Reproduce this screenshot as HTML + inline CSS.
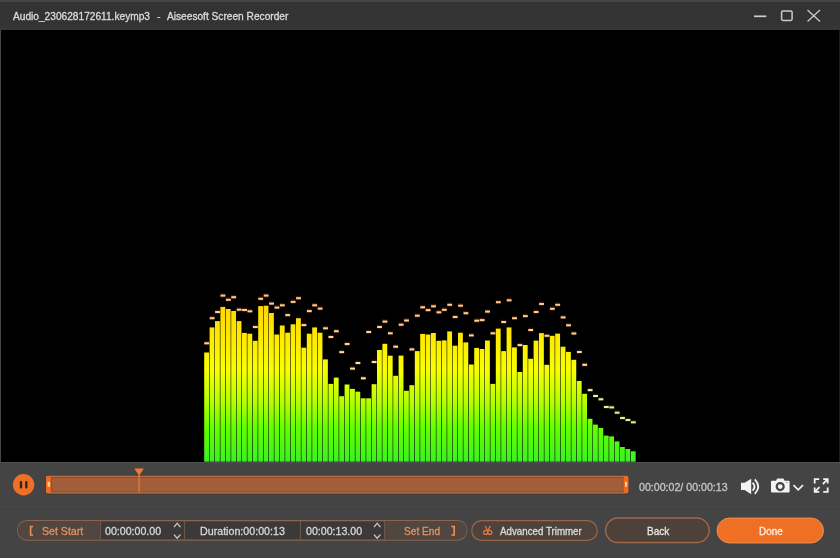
<!DOCTYPE html>
<html><head><meta charset="utf-8">
<style>
*{box-sizing:border-box;margin:0;padding:0}
html,body{width:840px;height:558px;overflow:hidden;background:#434443;font-family:"Liberation Sans",sans-serif}
#root{position:relative;width:840px;height:558px;background:#434443}
.abs{position:absolute}
#title{left:0;top:0;width:840px;height:30px;background:linear-gradient(#333 0,#333 23px,#363636 24px,#363636 30px);border-top:2px solid #454545}
#title .t{position:absolute;left:13px;top:9px;font-size:11px;color:#e6e6e6;white-space:pre;letter-spacing:0}
#video{left:0;top:30px;width:840px;height:432px;background:#000;border-left:1.3px solid #474747;border-right:1px solid #1c1c1c}
#ctrl{left:0;top:462px;width:840px;height:96px;background:#434443;border-top:1px solid #4f4f4f}
.sep{left:0;top:506px;width:840px;height:1px;background:#484848}
.txt{position:absolute;white-space:pre;font-size:11px;line-height:20px;-webkit-text-stroke:0.3px currentColor}
.txt span,.tt span{display:inline-block;transform-origin:0 0}
.txt{will-change:transform}
</style></head><body><div id="root">
<div id="title" class="abs"></div>
<div class="txt tt" style="left:13.3px;top:6px;font-size:10.5px;color:#dcdcdc"><span style="transform:scaleX(0.967)">Audio_230628172611.keymp3</span></div>
<div class="txt tt" style="left:157px;top:6px;font-size:10.5px;color:#dcdcdc">-</div>
<div class="txt tt" style="left:166.9px;top:6px;font-size:10.5px;color:#dcdcdc"><span style="transform:scaleX(0.967)">Aiseesoft Screen Recorder</span></div>
<!-- window controls -->
<svg class="abs" style="left:0;top:0" width="840" height="30">
 <line x1="754" y1="16.3" x2="766.3" y2="16.3" stroke="#cccccc" stroke-width="1.7"/>
 <rect x="781.6" y="11" width="10.5" height="9.4" rx="1.3" fill="none" stroke="#cccccc" stroke-width="1.5"/>
 <line x1="807.5" y1="10" x2="820" y2="21.5" stroke="#cfcfcf" stroke-width="1.2"/>
 <line x1="820" y1="10" x2="807.5" y2="21.5" stroke="#cfcfcf" stroke-width="1.2"/>
</svg>
<div id="video" class="abs"></div>
<div id="ctrl" class="abs"></div>
<div class="abs sep"></div>
<svg width="840" height="558" viewBox="0 0 840 558" style="position:absolute;left:0;top:0">
<defs><linearGradient id="g" gradientUnits="userSpaceOnUse" x1="0" y1="290" x2="0" y2="462"><stop offset="0" stop-color="#ffb800"/><stop offset="0.087" stop-color="#ffd800"/><stop offset="0.26" stop-color="#ffe800"/><stop offset="0.465" stop-color="#f8ff00"/><stop offset="0.64" stop-color="#b8ff00"/><stop offset="0.814" stop-color="#60ff00"/><stop offset="1" stop-color="#3cf024"/></linearGradient><linearGradient id="c" gradientUnits="userSpaceOnUse" x1="0" y1="290" x2="0" y2="462"><stop offset="0" stop-color="#ffc890"/><stop offset="0.35" stop-color="#ffd8a0"/><stop offset="0.55" stop-color="#f4f0b0"/><stop offset="0.8" stop-color="#dcf09c"/><stop offset="1" stop-color="#c8f090"/></linearGradient><linearGradient id="h" gradientUnits="userSpaceOnUse" x1="0" y1="290" x2="0" y2="462"><stop offset="0" stop-color="#7a2600"/><stop offset="0.4" stop-color="#5a3000"/><stop offset="1" stop-color="#304000"/></linearGradient></defs>
<g fill="url(#g)">
<rect x="204.20" y="352.5" width="4.85" height="109.2"/>
<rect x="209.60" y="327.4" width="4.85" height="134.3"/>
<rect x="215.00" y="321.1" width="4.85" height="140.6"/>
<rect x="220.40" y="306.9" width="4.85" height="154.8"/>
<rect x="225.80" y="309.0" width="4.85" height="152.7"/>
<rect x="231.20" y="311.0" width="4.85" height="150.7"/>
<rect x="236.60" y="321.1" width="4.85" height="140.6"/>
<rect x="242.00" y="332.9" width="4.85" height="128.8"/>
<rect x="247.40" y="333.7" width="4.85" height="128.0"/>
<rect x="252.80" y="340.8" width="4.85" height="120.9"/>
<rect x="258.20" y="306.1" width="4.85" height="155.6"/>
<rect x="263.60" y="305.7" width="4.85" height="156.0"/>
<rect x="269.00" y="313.0" width="4.85" height="148.7"/>
<rect x="274.40" y="334.5" width="4.85" height="127.2"/>
<rect x="279.80" y="325.5" width="4.85" height="136.2"/>
<rect x="285.20" y="332.7" width="4.85" height="129.0"/>
<rect x="290.60" y="324.3" width="4.85" height="137.4"/>
<rect x="296.00" y="318.2" width="4.85" height="143.5"/>
<rect x="301.40" y="347.7" width="4.85" height="114.0"/>
<rect x="306.80" y="333.7" width="4.85" height="128.0"/>
<rect x="312.20" y="327.4" width="4.85" height="134.3"/>
<rect x="317.60" y="332.7" width="4.85" height="129.0"/>
<rect x="323.00" y="359.4" width="4.85" height="102.3"/>
<rect x="328.40" y="383.9" width="4.85" height="77.8"/>
<rect x="333.80" y="377.6" width="4.85" height="84.1"/>
<rect x="339.20" y="396.2" width="4.85" height="65.5"/>
<rect x="344.60" y="384.5" width="4.85" height="77.2"/>
<rect x="350.00" y="388.9" width="4.85" height="72.8"/>
<rect x="355.40" y="391.7" width="4.85" height="70.0"/>
<rect x="360.80" y="398.3" width="4.85" height="63.4"/>
<rect x="366.20" y="398.3" width="4.85" height="63.4"/>
<rect x="371.60" y="384.2" width="4.85" height="77.5"/>
<rect x="377.00" y="350.0" width="4.85" height="111.7"/>
<rect x="382.40" y="343.8" width="4.85" height="117.9"/>
<rect x="387.80" y="355.7" width="4.85" height="106.0"/>
<rect x="393.20" y="375.8" width="4.85" height="85.9"/>
<rect x="398.60" y="355.6" width="4.85" height="106.1"/>
<rect x="404.00" y="390.8" width="4.85" height="70.9"/>
<rect x="409.40" y="385.2" width="4.85" height="76.5"/>
<rect x="414.80" y="351.1" width="4.85" height="110.6"/>
<rect x="420.20" y="333.9" width="4.85" height="127.8"/>
<rect x="425.60" y="334.5" width="4.85" height="127.2"/>
<rect x="431.00" y="333.0" width="4.85" height="128.7"/>
<rect x="436.40" y="340.8" width="4.85" height="120.9"/>
<rect x="441.80" y="340.4" width="4.85" height="121.3"/>
<rect x="447.20" y="331.4" width="4.85" height="130.3"/>
<rect x="452.60" y="345.7" width="4.85" height="116.0"/>
<rect x="458.00" y="332.7" width="4.85" height="129.0"/>
<rect x="463.40" y="342.4" width="4.85" height="119.3"/>
<rect x="468.80" y="364.5" width="4.85" height="97.2"/>
<rect x="474.20" y="347.9" width="4.85" height="113.8"/>
<rect x="479.60" y="349.0" width="4.85" height="112.7"/>
<rect x="485.00" y="340.5" width="4.85" height="121.2"/>
<rect x="490.40" y="383.9" width="4.85" height="77.8"/>
<rect x="495.80" y="328.6" width="4.85" height="133.1"/>
<rect x="501.20" y="351.1" width="4.85" height="110.6"/>
<rect x="506.60" y="327.4" width="4.85" height="134.3"/>
<rect x="512.00" y="347.4" width="4.85" height="114.3"/>
<rect x="517.40" y="372.0" width="4.85" height="89.7"/>
<rect x="522.80" y="345.0" width="4.85" height="116.7"/>
<rect x="528.20" y="358.8" width="4.85" height="102.9"/>
<rect x="533.60" y="340.6" width="4.85" height="121.1"/>
<rect x="539.00" y="333.1" width="4.85" height="128.6"/>
<rect x="544.40" y="364.8" width="4.85" height="96.9"/>
<rect x="549.80" y="335.8" width="4.85" height="125.9"/>
<rect x="555.20" y="333.6" width="4.85" height="128.1"/>
<rect x="560.60" y="346.7" width="4.85" height="115.0"/>
<rect x="566.00" y="351.9" width="4.85" height="109.8"/>
<rect x="571.40" y="359.8" width="4.85" height="101.9"/>
<rect x="576.80" y="381.0" width="4.85" height="80.7"/>
<rect x="582.20" y="393.8" width="4.85" height="67.9"/>
<rect x="587.60" y="418.8" width="4.85" height="42.9"/>
<rect x="593.00" y="424.6" width="4.85" height="37.1"/>
<rect x="598.40" y="428.0" width="4.85" height="33.7"/>
<rect x="603.80" y="435.6" width="4.85" height="26.1"/>
<rect x="609.20" y="436.4" width="4.85" height="25.3"/>
<rect x="614.60" y="441.4" width="4.85" height="20.3"/>
<rect x="620.00" y="447.0" width="4.85" height="14.7"/>
<rect x="625.40" y="449.0" width="4.85" height="12.7"/>
<rect x="630.80" y="451.3" width="4.85" height="10.4"/>
</g><g fill="url(#h)">
<rect x="204.20" y="341.0" width="4.85" height="4.2" opacity="0.55"/>
<rect x="209.60" y="315.9" width="4.85" height="4.2" opacity="0.55"/>
<rect x="215.00" y="309.7" width="4.85" height="4.2" opacity="0.55"/>
<rect x="220.40" y="293.3" width="4.85" height="4.2" opacity="0.55"/>
<rect x="225.80" y="297.5" width="4.85" height="4.2" opacity="0.55"/>
<rect x="231.20" y="294.9" width="4.85" height="4.2" opacity="0.55"/>
<rect x="236.60" y="307.4" width="4.85" height="4.2" opacity="0.55"/>
<rect x="242.00" y="307.7" width="4.85" height="4.2" opacity="0.55"/>
<rect x="247.40" y="309.0" width="4.85" height="4.2" opacity="0.55"/>
<rect x="252.80" y="324.7" width="4.85" height="4.2" opacity="0.55"/>
<rect x="258.20" y="296.5" width="4.85" height="4.2" opacity="0.55"/>
<rect x="263.60" y="293.3" width="4.85" height="4.2" opacity="0.55"/>
<rect x="269.00" y="301.3" width="4.85" height="4.2" opacity="0.55"/>
<rect x="274.40" y="305.3" width="4.85" height="4.2" opacity="0.55"/>
<rect x="279.80" y="303.0" width="4.85" height="4.2" opacity="0.55"/>
<rect x="285.20" y="312.8" width="4.85" height="4.2" opacity="0.55"/>
<rect x="290.60" y="299.6" width="4.85" height="4.2" opacity="0.55"/>
<rect x="296.00" y="295.9" width="4.85" height="4.2" opacity="0.55"/>
<rect x="301.40" y="322.8" width="4.85" height="4.2" opacity="0.55"/>
<rect x="306.80" y="308.8" width="4.85" height="4.2" opacity="0.55"/>
<rect x="312.20" y="303.0" width="4.85" height="4.2" opacity="0.55"/>
<rect x="317.60" y="306.3" width="4.85" height="4.2" opacity="0.55"/>
<rect x="323.00" y="326.0" width="4.85" height="4.2" opacity="0.55"/>
<rect x="328.40" y="334.7" width="4.85" height="4.2" opacity="0.55"/>
<rect x="333.80" y="328.9" width="4.85" height="4.2" opacity="0.55"/>
<rect x="339.20" y="349.8" width="4.85" height="4.2" opacity="0.55"/>
<rect x="344.60" y="341.7" width="4.85" height="4.2" opacity="0.55"/>
<rect x="350.00" y="366.3" width="4.85" height="4.2" opacity="0.55"/>
<rect x="355.40" y="360.7" width="4.85" height="4.2" opacity="0.55"/>
<rect x="360.80" y="376.0" width="4.85" height="4.2" opacity="0.55"/>
<rect x="366.20" y="329.7" width="4.85" height="4.2" opacity="0.55"/>
<rect x="371.60" y="359.7" width="4.85" height="4.2" opacity="0.55"/>
<rect x="377.00" y="324.7" width="4.85" height="4.2" opacity="0.55"/>
<rect x="382.40" y="319.3" width="4.85" height="4.2" opacity="0.55"/>
<rect x="387.80" y="331.0" width="4.85" height="4.2" opacity="0.55"/>
<rect x="393.20" y="344.4" width="4.85" height="4.2" opacity="0.55"/>
<rect x="398.60" y="322.4" width="4.85" height="4.2" opacity="0.55"/>
<rect x="404.00" y="318.2" width="4.85" height="4.2" opacity="0.55"/>
<rect x="409.40" y="347.1" width="4.85" height="4.2" opacity="0.55"/>
<rect x="414.80" y="313.4" width="4.85" height="4.2" opacity="0.55"/>
<rect x="420.20" y="305.0" width="4.85" height="4.2" opacity="0.55"/>
<rect x="425.60" y="307.8" width="4.85" height="4.2" opacity="0.55"/>
<rect x="431.00" y="304.0" width="4.85" height="4.2" opacity="0.55"/>
<rect x="436.40" y="310.0" width="4.85" height="4.2" opacity="0.55"/>
<rect x="441.80" y="307.5" width="4.85" height="4.2" opacity="0.55"/>
<rect x="447.20" y="302.5" width="4.85" height="4.2" opacity="0.55"/>
<rect x="452.60" y="314.7" width="4.85" height="4.2" opacity="0.55"/>
<rect x="458.00" y="303.4" width="4.85" height="4.2" opacity="0.55"/>
<rect x="463.40" y="310.9" width="4.85" height="4.2" opacity="0.55"/>
<rect x="468.80" y="333.1" width="4.85" height="4.2" opacity="0.55"/>
<rect x="474.20" y="318.4" width="4.85" height="4.2" opacity="0.55"/>
<rect x="479.60" y="317.8" width="4.85" height="4.2" opacity="0.55"/>
<rect x="485.00" y="309.3" width="4.85" height="4.2" opacity="0.55"/>
<rect x="490.40" y="331.0" width="4.85" height="4.2" opacity="0.55"/>
<rect x="495.80" y="299.9" width="4.85" height="4.2" opacity="0.55"/>
<rect x="501.20" y="319.7" width="4.85" height="4.2" opacity="0.55"/>
<rect x="506.60" y="298.0" width="4.85" height="4.2" opacity="0.55"/>
<rect x="512.00" y="315.9" width="4.85" height="4.2" opacity="0.55"/>
<rect x="517.40" y="342.8" width="4.85" height="4.2" opacity="0.55"/>
<rect x="522.80" y="313.8" width="4.85" height="4.2" opacity="0.55"/>
<rect x="528.20" y="327.7" width="4.85" height="4.2" opacity="0.55"/>
<rect x="533.60" y="309.7" width="4.85" height="4.2" opacity="0.55"/>
<rect x="539.00" y="301.7" width="4.85" height="4.2" opacity="0.55"/>
<rect x="544.40" y="333.5" width="4.85" height="4.2" opacity="0.55"/>
<rect x="549.80" y="306.5" width="4.85" height="4.2" opacity="0.55"/>
<rect x="555.20" y="302.5" width="4.85" height="4.2" opacity="0.55"/>
<rect x="560.60" y="315.1" width="4.85" height="4.2" opacity="0.55"/>
<rect x="566.00" y="323.0" width="4.85" height="4.2" opacity="0.55"/>
<rect x="571.40" y="331.2" width="4.85" height="4.2" opacity="0.55"/>
<rect x="576.80" y="349.7" width="4.85" height="4.2" opacity="0.55"/>
<rect x="582.20" y="362.5" width="4.85" height="4.2" opacity="0.55"/>
<rect x="587.60" y="387.8" width="4.85" height="4.2" opacity="0.55"/>
<rect x="593.00" y="393.7" width="4.85" height="4.2" opacity="0.55"/>
<rect x="598.40" y="397.0" width="4.85" height="4.2" opacity="0.55"/>
<rect x="603.80" y="404.7" width="4.85" height="4.2" opacity="0.55"/>
<rect x="609.20" y="405.1" width="4.85" height="4.2" opacity="0.55"/>
<rect x="614.60" y="410.4" width="4.85" height="4.2" opacity="0.55"/>
<rect x="620.00" y="415.7" width="4.85" height="4.2" opacity="0.55"/>
<rect x="625.40" y="417.7" width="4.85" height="4.2" opacity="0.55"/>
<rect x="630.80" y="420.0" width="4.85" height="4.2" opacity="0.55"/>
</g><g fill="url(#c)">
<rect x="204.30" y="342.3" width="4.85" height="2"/>
<rect x="209.70" y="317.2" width="4.85" height="2"/>
<rect x="215.10" y="311.0" width="4.85" height="2"/>
<rect x="220.50" y="294.6" width="4.85" height="2"/>
<rect x="225.90" y="298.8" width="4.85" height="2"/>
<rect x="231.30" y="296.2" width="4.85" height="2"/>
<rect x="236.70" y="308.7" width="4.85" height="2"/>
<rect x="242.10" y="309.0" width="4.85" height="2"/>
<rect x="247.50" y="310.3" width="4.85" height="2"/>
<rect x="252.90" y="326.0" width="4.85" height="2"/>
<rect x="258.30" y="297.8" width="4.85" height="2"/>
<rect x="263.70" y="294.6" width="4.85" height="2"/>
<rect x="269.10" y="302.6" width="4.85" height="2"/>
<rect x="274.50" y="306.6" width="4.85" height="2"/>
<rect x="279.90" y="304.3" width="4.85" height="2"/>
<rect x="285.30" y="314.1" width="4.85" height="2"/>
<rect x="290.70" y="300.9" width="4.85" height="2"/>
<rect x="296.10" y="297.2" width="4.85" height="2"/>
<rect x="301.50" y="324.1" width="4.85" height="2"/>
<rect x="306.90" y="310.1" width="4.85" height="2"/>
<rect x="312.30" y="304.3" width="4.85" height="2"/>
<rect x="317.70" y="307.6" width="4.85" height="2"/>
<rect x="323.10" y="327.3" width="4.85" height="2"/>
<rect x="328.50" y="336.0" width="4.85" height="2"/>
<rect x="333.90" y="330.2" width="4.85" height="2"/>
<rect x="339.30" y="351.1" width="4.85" height="2"/>
<rect x="344.70" y="343.0" width="4.85" height="2"/>
<rect x="350.10" y="367.6" width="4.85" height="2"/>
<rect x="355.50" y="362.0" width="4.85" height="2"/>
<rect x="360.90" y="377.3" width="4.85" height="2"/>
<rect x="366.30" y="331.0" width="4.85" height="2"/>
<rect x="371.70" y="361.0" width="4.85" height="2"/>
<rect x="377.10" y="326.0" width="4.85" height="2"/>
<rect x="382.50" y="320.6" width="4.85" height="2"/>
<rect x="387.90" y="332.3" width="4.85" height="2"/>
<rect x="393.30" y="345.7" width="4.85" height="2"/>
<rect x="398.70" y="323.7" width="4.85" height="2"/>
<rect x="404.10" y="319.5" width="4.85" height="2"/>
<rect x="409.50" y="348.4" width="4.85" height="2"/>
<rect x="414.90" y="314.7" width="4.85" height="2"/>
<rect x="420.30" y="306.3" width="4.85" height="2"/>
<rect x="425.70" y="309.1" width="4.85" height="2"/>
<rect x="431.10" y="305.3" width="4.85" height="2"/>
<rect x="436.50" y="311.3" width="4.85" height="2"/>
<rect x="441.90" y="308.8" width="4.85" height="2"/>
<rect x="447.30" y="303.8" width="4.85" height="2"/>
<rect x="452.70" y="316.0" width="4.85" height="2"/>
<rect x="458.10" y="304.7" width="4.85" height="2"/>
<rect x="463.50" y="312.2" width="4.85" height="2"/>
<rect x="468.90" y="334.4" width="4.85" height="2"/>
<rect x="474.30" y="319.7" width="4.85" height="2"/>
<rect x="479.70" y="319.1" width="4.85" height="2"/>
<rect x="485.10" y="310.6" width="4.85" height="2"/>
<rect x="490.50" y="332.3" width="4.85" height="2"/>
<rect x="495.90" y="301.2" width="4.85" height="2"/>
<rect x="501.30" y="321.0" width="4.85" height="2"/>
<rect x="506.70" y="299.3" width="4.85" height="2"/>
<rect x="512.10" y="317.2" width="4.85" height="2"/>
<rect x="517.50" y="344.1" width="4.85" height="2"/>
<rect x="522.90" y="315.1" width="4.85" height="2"/>
<rect x="528.30" y="329.0" width="4.85" height="2"/>
<rect x="533.70" y="311.0" width="4.85" height="2"/>
<rect x="539.10" y="303.0" width="4.85" height="2"/>
<rect x="544.50" y="334.8" width="4.85" height="2"/>
<rect x="549.90" y="307.8" width="4.85" height="2"/>
<rect x="555.30" y="303.8" width="4.85" height="2"/>
<rect x="560.70" y="316.4" width="4.85" height="2"/>
<rect x="566.10" y="324.3" width="4.85" height="2"/>
<rect x="571.50" y="332.5" width="4.85" height="2"/>
<rect x="576.90" y="351.0" width="4.85" height="2"/>
<rect x="582.30" y="363.8" width="4.85" height="2"/>
<rect x="587.70" y="389.1" width="4.85" height="2"/>
<rect x="593.10" y="395.0" width="4.85" height="2"/>
<rect x="598.50" y="398.3" width="4.85" height="2"/>
<rect x="603.90" y="406.0" width="4.85" height="2"/>
<rect x="609.30" y="406.4" width="4.85" height="2"/>
<rect x="614.70" y="411.7" width="4.85" height="2"/>
<rect x="620.10" y="417.0" width="4.85" height="2"/>
<rect x="625.50" y="419.0" width="4.85" height="2"/>
<rect x="630.90" y="421.3" width="4.85" height="2"/>
</g></svg>
<!-- control bar svg -->
<svg class="abs" style="left:0;top:0" width="840" height="558">
 <!-- pause -->
 <circle cx="23.6" cy="484.7" r="10.7" fill="#ee7028"/>
 <rect x="19.8" y="481" width="2.4" height="7.5" rx="1" fill="#3a2418"/>
 <rect x="25.1" y="481" width="2.4" height="7.5" rx="1" fill="#3a2418"/>
 <!-- timeline -->
 <rect x="45.3" y="474.7" width="583.7" height="19.9" rx="2.2" fill="#4a3a30"/>
 <rect x="46" y="475.8" width="582.3" height="17.6" rx="1.6" fill="#be7850"/>
 <rect x="50.8" y="476.9" width="573" height="15.4" fill="#8a4a26"/>
 <rect x="51.8" y="477.9" width="571" height="13.3" fill="#a25e3a"/>
 <rect x="51.8" y="490.2" width="571" height="1" fill="#9a6440"/>
 <rect x="46" y="475.9" width="4.9" height="16.9" rx="1.5" fill="#f06a1c"/>
 <rect x="47.6" y="481.8" width="2.4" height="4.9" fill="#ffc898"/>
 <rect x="623.6" y="475.9" width="4.7" height="16.9" rx="1.5" fill="#f06a1c"/>
 <rect x="625" y="481.8" width="2.2" height="4.9" fill="#ffc898"/>
 <!-- playhead -->
 <path d="M134.3 468.4 L143.9 468.4 L139.1 475.8 Z" fill="#f07a30"/>
 <rect x="138.4" y="475" width="1.4" height="17.5" fill="#e0783c"/>
 <!-- speaker -->
 <path d="M741 482.8 H744.6 L751.2 478.8 V494.2 L744.6 490 H741 Z" fill="#f2f2f2"/>
 <path d="M752.6 482.6 Q756.4 486.6 752.6 490.6" fill="none" stroke="#f2f2f2" stroke-width="1.8"/>
 <path d="M754.8 479.4 Q761.6 486.6 754.8 493.8" fill="none" stroke="#f2f2f2" stroke-width="1.8"/>
 <!-- camera -->
 <path d="M772 480.8 H776 L777.2 478.4 H783.4 L784.6 480.8 H788.6 Q789.6 480.8 789.6 481.8 V491.4 Q789.6 492.4 788.6 492.4 H772 Q771 492.4 771 491.4 V481.8 Q771 480.8 772 480.8 Z" fill="#f2f2f2"/>
 <circle cx="780.2" cy="486.6" r="3.5" fill="none" stroke="#434443" stroke-width="2.2"/>
 <rect x="786" y="482" width="1.4" height="1" fill="#9a9a9a"/>
 <path d="M793.5 485.2 L798.2 489.8 L803 485.2" fill="none" stroke="#f2f2f2" stroke-width="1.7"/>
 <!-- fullscreen -->
 <g fill="none" stroke="#f2f2f2" stroke-width="1.8">
  <path d="M814.7 483.6 V479.2 H819.2"/>
  <path d="M823.2 479.2 H827.7 V483.6"/>
  <path d="M827.5 479.4 L822.9 484"/>
  <path d="M814.7 487.5 V491.9 H819.2"/>
  <path d="M814.9 491.7 L819.5 487.1"/>
  <path d="M823.2 491.9 H827.7 V487.5"/>
 </g>
 <!-- pill group -->
 <path d="M27.2 520.6 H457.4 A9.75 9.75 0 0 1 457.4 540.1 H27.2 A9.75 9.75 0 0 1 27.2 520.6 Z" fill="#3b3a39" stroke="#8a6450" stroke-width="1.1"/>
 <path d="M27.2 521.1 H100.3 V539.6 H27.2 A9.25 9.25 0 0 1 27.2 521.1 Z" fill="#524740"/>
 <path d="M385 521.1 H457.4 A9.25 9.25 0 0 1 457.4 539.6 H385 Z" fill="#524740"/>
 <g stroke="#76584a" stroke-width="1">
  <line x1="100.6" y1="521" x2="100.6" y2="539.6"/>
  <line x1="184.6" y1="521" x2="184.6" y2="539.6"/>
  <line x1="300.4" y1="521" x2="300.4" y2="539.6"/>
  <line x1="384.6" y1="521" x2="384.6" y2="539.6"/>
 </g>
 <!-- bracket icons -->
 <path d="M33 526.5 H30.6 V535 H33" fill="none" stroke="#e8925a" stroke-width="1.6"/>
 <path d="M451.4 526.5 H454.2 V535 H451.4" fill="none" stroke="#e8925a" stroke-width="1.6"/>
 <!-- spin arrows -->
 <g fill="none" stroke="#cccccc" stroke-width="1.3">
  <path d="M174 527.2 L177.2 523.2 L180.4 527.2"/>
  <path d="M174 534.6 L177.2 538.2 L180.4 534.6"/>
  <path d="M374 527.2 L377.2 523.2 L380.4 527.2"/>
  <path d="M374 534.6 L377.2 538.2 L380.4 534.6"/>
 </g>
 <!-- advanced trimmer pill -->
 <rect x="471.7" y="520.6" width="125.6" height="19.8" rx="9.9" fill="#4e433c" stroke="#9a6648" stroke-width="1.2"/>
  <g fill="none" stroke="#dc7c40" stroke-width="1.2">
  <circle cx="485.7" cy="532.4" r="2"/>
  <circle cx="489.8" cy="532.4" r="2"/>
  <path d="M485.2 525.9 L487.6 530.6"/>
  <path d="M490.4 525.9 L487.9 530.6"/>
 </g>
 <!-- back -->
 <rect x="605.6" y="518.1" width="103.6" height="24.5" rx="12.25" fill="#4e4139" stroke="#9c6848" stroke-width="1.5"/>
 <!-- done -->
 <rect x="717" y="518" width="106.5" height="25" rx="12.5" fill="#ef6f25" stroke="#f39a5e" stroke-width="0.8"/>
</svg>
<div class="txt" style="left:42.3px;top:521px;color:#e4925e"><span style="transform:scaleX(0.963)">Set Start</span></div>
<div class="txt" style="left:105px;top:521px;color:#d8d8d8"><span style="transform:scaleX(0.966)">00:00:00.00</span></div>
<div class="txt" style="left:200.2px;top:521px;color:#d8d8d8"><span style="transform:scaleX(0.97)">Duration:00:00:13</span></div>
<div class="txt" style="left:305.6px;top:521px;color:#d8d8d8"><span style="transform:scaleX(0.966)">00:00:13.00</span></div>
<div class="txt" style="left:404px;top:521px;color:#e4925e"><span style="transform:scaleX(0.92)">Set End</span></div>
<div class="txt" style="left:500.1px;top:521px;color:#dedede"><span style="transform:scaleX(0.886)">Advanced Trimmer</span></div>
<div class="txt" style="left:646.5px;top:521px;color:#e8e8e8"><span style="transform:scaleX(0.91)">Back</span></div>
<div class="txt" style="left:758.5px;top:521px;color:#fff0e6"><span style="transform:scaleX(0.9)">Done</span></div>
<div class="txt" style="left:639px;top:476.5px;color:#c8c8c8"><span style="transform:scaleX(0.966)">00:00:02/ 00:00:13</span></div>
</div></body></html>
